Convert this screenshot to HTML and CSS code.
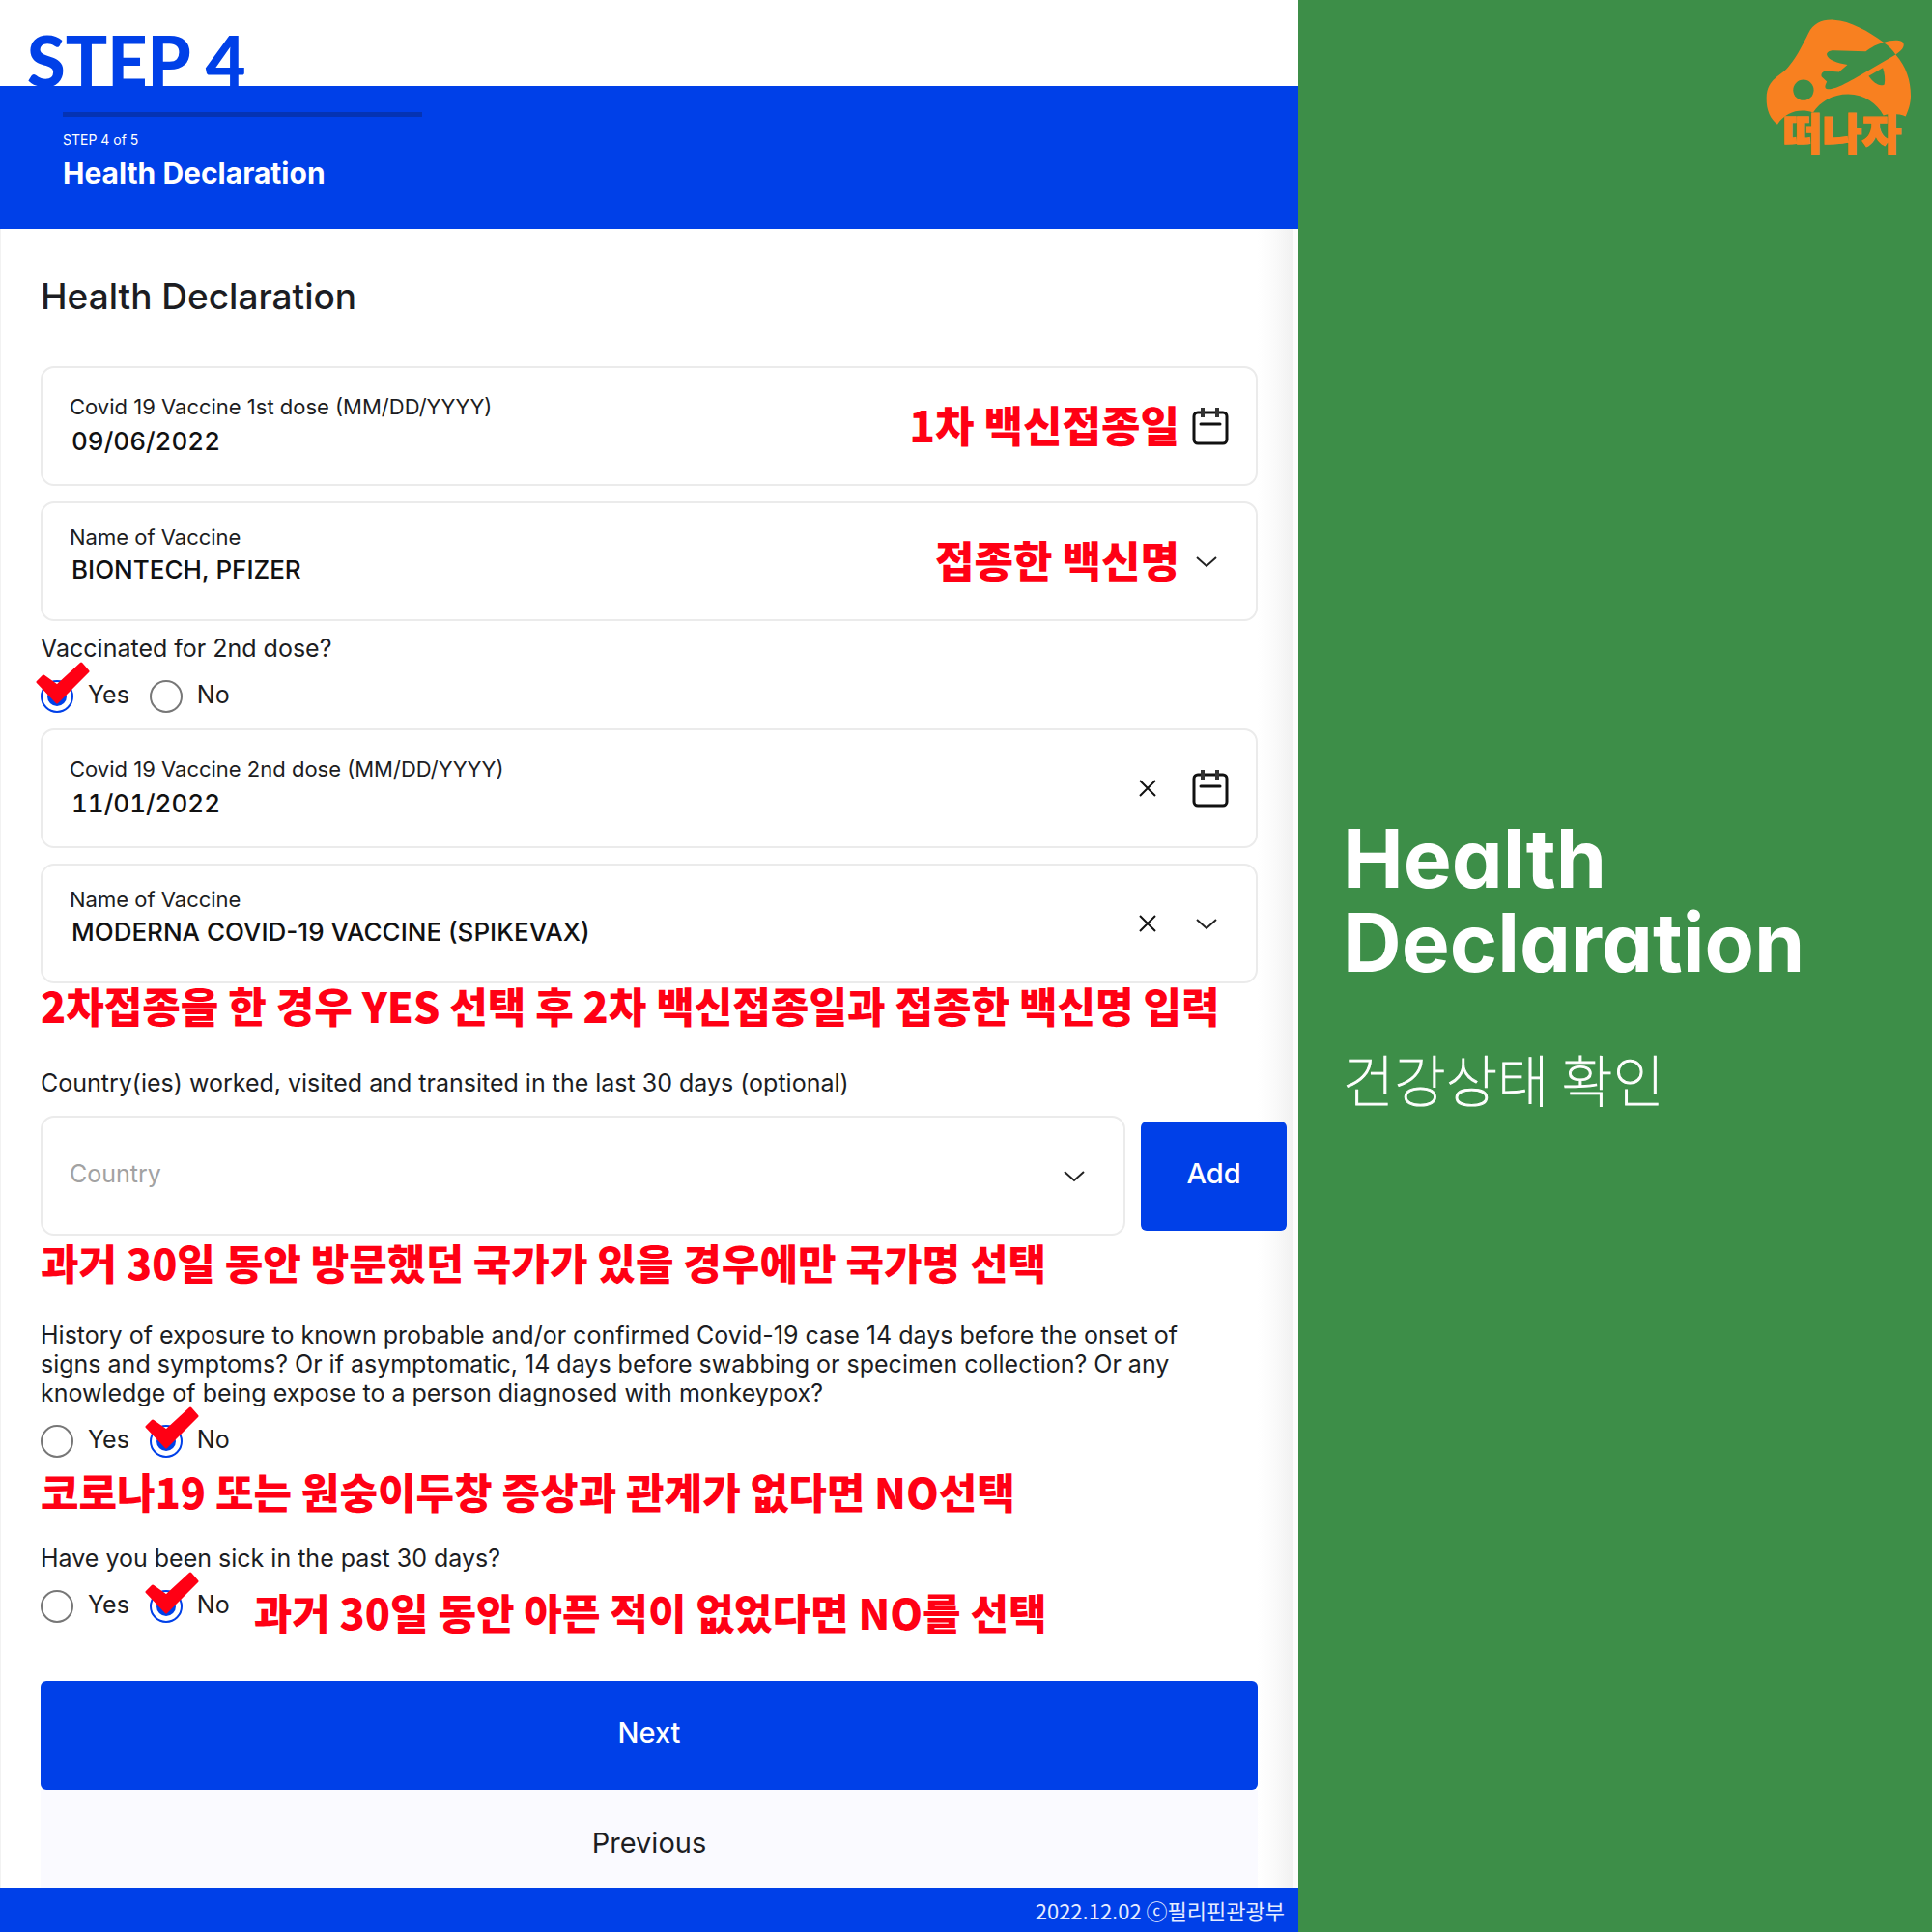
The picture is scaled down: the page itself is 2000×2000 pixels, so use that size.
FILE: index.html
```html
<!DOCTYPE html>
<html lang="en">
<head>
<meta charset="utf-8">
<meta name="viewport" content="width=device-width, initial-scale=1">
<title>Health Declaration</title>
<link rel="stylesheet" href="styles.css">
</head>
<body>
<svg class="sprite" aria-hidden="true">
  <symbol id="calendar" viewBox="0 0 38 40">
    <rect x="2" y="6" width="34" height="32" rx="4" fill="none" stroke="#111" stroke-width="3"/>
    <path d="M11 1v10M26 1v10" fill="none" stroke="#333" stroke-width="4"/>
    <path d="M9 18h20" fill="none" stroke="#111" stroke-width="3" stroke-linecap="round"/>
  </symbol>
  <symbol id="chevron" viewBox="0 0 38 40">
    <path d="M5 16l10 9 10-9" fill="none" stroke="#222" stroke-width="2"/>
  </symbol>
  <symbol id="cross" viewBox="0 0 18 18">
    <path d="M1 1l16 16M17 1L1 17" fill="none" stroke="#111" stroke-width="2"/>
  </symbol>
  <symbol id="tick" viewBox="0 0 56 44">
    <path d="M2 21l6-6 14 10L47 2l7 8-32 32z" fill="#ff0014" stroke="#ff0014" stroke-width="3" stroke-linejoin="round"/>
  </symbol>
</svg>
<div class="layout">
  <main class="sheet">
    <div class="step-title">STEP 4</div>
    <header class="banner">
      <div class="progress"></div>
      <p class="banner-step">STEP 4 of 5</p>
      <h1 class="banner-title">Health Declaration</h1>
    </header>
    <form class="form">
      <h2 class="form-title">Health Declaration</h2>

      <div class="fields">
        <div class="card">
          <div class="field">
            <label for="dose1">Covid 19 Vaccine 1st dose (MM/DD/YYYY)</label>
            <input id="dose1" type="text" value="09/06/2022">
          </div>
          <strong class="note note-inline">1차 백신접종일</strong>
          <button class="icon-button" type="button" aria-label="Open calendar"><svg class="icon"><use href="#calendar"/></svg></button>
        </div>
        <div class="card">
          <div class="field field-select">
            <label for="vaccine1">Name of Vaccine</label>
            <select id="vaccine1"><option>BIONTECH, PFIZER</option></select>
          </div>
          <strong class="note note-inline">접종한 백신명</strong>
          <svg class="icon"><use href="#chevron"/></svg>
        </div>
      </div>

      <fieldset class="question">
        <legend>Vaccinated for 2nd dose?</legend>
        <div class="choices">
          <label class="choice"><input type="radio" name="second" checked><svg class="tick"><use href="#tick"/></svg>Yes</label>
          <label class="choice"><input type="radio" name="second">No</label>
        </div>
      </fieldset>

      <div class="fields fields-second">
        <div class="card">
          <div class="field">
            <label for="dose2">Covid 19 Vaccine 2nd dose (MM/DD/YYYY)</label>
            <input id="dose2" type="text" value="11/01/2022">
          </div>
          <button class="icon-button clear" type="button" aria-label="Clear date"><svg class="icon-cross"><use href="#cross"/></svg></button>
          <button class="icon-button" type="button" aria-label="Open calendar"><svg class="icon"><use href="#calendar"/></svg></button>
        </div>
        <div class="card">
          <div class="field field-select">
            <label for="vaccine2">Name of Vaccine</label>
            <select id="vaccine2"><option>MODERNA COVID-19 VACCINE (SPIKEVAX)</option></select>
          </div>
          <button class="icon-button clear" type="button" aria-label="Clear vaccine"><svg class="icon-cross"><use href="#cross"/></svg></button>
          <svg class="icon"><use href="#chevron"/></svg>
        </div>
      </div>
      <p class="note note-dose">2차접종을 한 경우 YES 선택 후 2차 백신접종일과 접종한 백신명 입력</p>

      <label class="country-label" for="country">Country(ies) worked, visited and transited in the last 30 days (optional)</label>
      <div class="country-row">
        <div class="card">
          <select class="country" id="country"><option>Country</option></select>
          <svg class="icon"><use href="#chevron"/></svg>
        </div>
        <button class="primary add" type="button">Add</button>
      </div>
      <p class="note note-country">과거 30일 동안 방문했던 국가가 있을 경우에만 국가명 선택</p>

      <fieldset class="question question-history">
        <legend>History of exposure to known probable and/or confirmed Covid-19 case 14 days before the onset of<br>signs and symptoms? Or if asymptomatic, 14 days before swabbing or specimen collection? Or any<br>knowledge of being expose to a person diagnosed with monkeypox?</legend>
        <div class="choices">
          <label class="choice"><input type="radio" name="exposure">Yes</label>
          <label class="choice"><input type="radio" name="exposure" checked><svg class="tick"><use href="#tick"/></svg>No</label>
        </div>
      </fieldset>
      <p class="note note-exposure">코로나19 또는 원숭이두창 증상과 관계가 없다면 NO선택</p>

      <fieldset class="question question-sick">
        <legend>Have you been sick in the past 30 days?</legend>
        <div class="choices">
          <label class="choice"><input type="radio" name="sick">Yes</label>
          <label class="choice"><input type="radio" name="sick" checked><svg class="tick"><use href="#tick"/></svg>No</label>
          <strong class="note note-sick">과거 30일 동안 아픈 적이 없었다면 NO를 선택</strong>
        </div>
      </fieldset>

      <div class="actions">
        <button class="primary next" type="submit">Next</button>
        <button class="previous" type="button">Previous</button>
      </div>
    </form>
    <footer class="credit">2022.12.02 ⓒ필리핀관광부</footer>
  </main>

  <aside class="panel">
    <svg class="logo" viewBox="80 50 460 470" role="img" aria-label="떠나자">
      <path fill="#f88020" d="M119 385C98 368 84 342 85 302C87 240 130 238 157 201C183 168 201 130 215 102C232 69 258 58 295 60C345 62 404 96 450 130C475 121 511 119 512 136C513 148 501 157 487 168C520 205 534 250 534 296C534 320 526 342 518 360C496 351 470 351 449 357C430 320 390 292 339 291C290 291 252 315 230 348C190 334 145 345 119 385Z"/>
      <g fill="#3d8e48">
        <circle cx="200" cy="278" r="32"/>
        <path d="M450 131C430 134 410 146 394 158L294 155C279 155 271 162 273 169C277 184 306 195 337 199L311 222L272 219C259 219 253 229 257 237L273 252L269 261C264 274 273 277 284 275C306 273 334 256 357 244L487 168C478 153 465 141 450 131Z"/>
        <path d="M403 235L447 209C453 225 455 245 452 261C436 270 417 254 403 235Z"/>
      </g>
      <text class="logo-text" x="320" y="464" text-anchor="middle">떠나자</text>
    </svg>
    <div class="panel-copy">
      <h2 class="panel-title">Health<br>Declaration</h2>
      <p class="panel-subtitle">건강상태 확인</p>
    </div>
  </aside>
</div>
</body>
</html>
```
FILE: styles.css
```css
:root {
  --blue: #0040e8;
  --green: #3d8e48;
  --red: #ff0014;
  --ink: #1c1d22;
  --korean: "Noto Sans CJK KR", sans-serif;
}

* { box-sizing: border-box; }

body {
  margin: 0;
  color: var(--ink);
  font-family: Inter, "Noto Sans CJK KR", sans-serif;
  font-size: 25px;
  line-height: 30px;
}

h1, h2, p, fieldset { margin: 0; padding: 0; border: 0; }
legend { padding: 0; }
button, input, select { font: inherit; color: inherit; margin: 0; }
button { border: 0; cursor: pointer; }

.sprite { display: none; }

.layout {
  display: grid;
  grid-template-columns: minmax(0, 672fr) minmax(0, 328fr);
  min-height: 100vh;
}

.sheet {
  display: flex;
  flex-direction: column;
  background: #fff;
}

.step-title {
  height: 89px;
  padding: 26px 28px 0;
  color: var(--blue);
  font-family: Lato, sans-serif;
  font-size: 72px;
  font-weight: 900;
  line-height: 72px;
}

.banner {
  padding: 27px 65px 40px;
  background: var(--blue);
  color: #fff;
}
.progress {
  width: 372px;
  height: 5px;
  background: #0433b4;
}
.banner-step {
  margin-top: 13px;
  font-size: 14px;
  line-height: 22px;
}
.banner-title {
  margin-top: 5px;
  font-size: 30px;
  line-height: 36px;
  font-weight: 700;
}

.form {
  flex: 1;
  padding: 48px 42px 0 41px;
  border-left: 1px solid #f2f2f2;
  background: linear-gradient(to left, #fcfcfc 5px, #f1f1f1 6px, #fafafa 24px, #fff 42px);
}
.form-title {
  font-size: 37px;
  line-height: 44px;
  font-weight: 500;
}

.fields {
  display: grid;
  gap: 16px;
  margin-top: 50px;
}
.fields-second { margin-top: 16px; }

.card {
  display: flex;
  align-items: center;
  height: 124px;
  padding: 0 28px;
  border: 2px solid #ebebeb;
  border-radius: 14px;
  background: #fff;
}
.field {
  flex: 1;
  display: flex;
  flex-direction: column;
  padding-bottom: 4px;
  font-size: 26px;
  line-height: 36px;
}
.field label { font-size: 22px; }
.field input, .field select {
  width: 100%;
  height: 36px;
  padding: 0 2px;
  border: 0;
  background: none;
  font-weight: 500;
  color: #111;
  outline: none;
}
.field input { font-variant-numeric: tabular-nums; }
.field-select {
  padding-bottom: 16px;
  line-height: 33px;
}
.field.field-select select { height: 33px; }
select { appearance: none; }

.icon { flex: none; display: block; width: 38px; height: 40px; }
.icon-cross { display: block; width: 18px; height: 18px; }
.icon-button { padding: 0; background: none; }
.clear { margin-right: 37px; }

.note {
  color: var(--red);
  font-family: var(--korean);
  font-size: 43px;
  font-weight: 900;
  line-height: 44px;
  white-space: nowrap;
}
.note-inline {
  margin-right: 13px;
  padding-bottom: 4px;
  font-size: 44px;
}
.note-dose { margin: 0 0 44px; }
.note-country { margin: 5px 0 39px; }
.note-exposure { margin: 12px 0 33px; }
.note-sick { margin: 0 0 -10px 4px; }

.question { margin-top: 13px; }
.question-history, .question-sick { margin-top: 0; }
.choices {
  display: flex;
  gap: 21px;
  height: 34px;
  margin-top: 18px;
}
.choice {
  position: relative;
  display: flex;
  gap: 15px;
}
.choice input {
  appearance: none;
  width: 34px;
  height: 34px;
  padding: 5px;
  border: 2px solid #777;
  border-radius: 50%;
}
.choice input:checked {
  border-color: var(--blue);
  background: var(--blue) content-box;
}
.tick {
  position: absolute;
  left: -5px;
  top: -19px;
  width: 56px;
  height: 44px;
}

.country-label { display: block; }
.country-row {
  display: flex;
  align-items: center;
  gap: 16px;
  margin: 19px -30px 0 0;
}
.country-row .card { flex: 1; }
.country {
  flex: 1;
  height: 60px;
  padding: 0 0 4px;
  border: 0;
  background: none;
  color: #a2a2a2;
}

.primary {
  height: 113px;
  padding: 0 0 5px;
  border-radius: 6px;
  background: var(--blue);
  color: #fff;
  font-size: 29px;
  font-weight: 500;
}
.add { width: 151px; }

.actions {
  display: grid;
  margin-top: 60px;
}
.previous {
  height: 101px;
  padding: 8px 0 0;
  background: #fafaff;
  font-size: 29px;
}

.credit {
  padding: 8px 14px;
  background: var(--blue);
  color: #e6ecff;
  font-family: var(--korean);
  font-size: 22px;
  line-height: 30px;
  text-align: right;
}

.panel {
  display: grid;
  grid-template-rows: 1fr auto 1fr;
  padding: 17px 20px 27px 46px;
  background: var(--green);
  color: #fff;
}
.logo {
  justify-self: end;
  width: 153px;
  height: 157px;
}
.logo-text {
  fill: #f88020;
  stroke: #f88020;
  stroke-width: 4px;
  font-family: var(--korean);
  font-size: 134px;
  font-weight: 900;
}
.panel-title {
  font-size: 84px;
  line-height: 87px;
  font-weight: 700;
  font-feature-settings: "cv11";
}
.panel-subtitle {
  margin-top: 67px;
  font-family: var(--korean);
  font-size: 58px;
  line-height: 60px;
  font-weight: 100;
  -webkit-text-stroke: 1px #fff;
}
```
